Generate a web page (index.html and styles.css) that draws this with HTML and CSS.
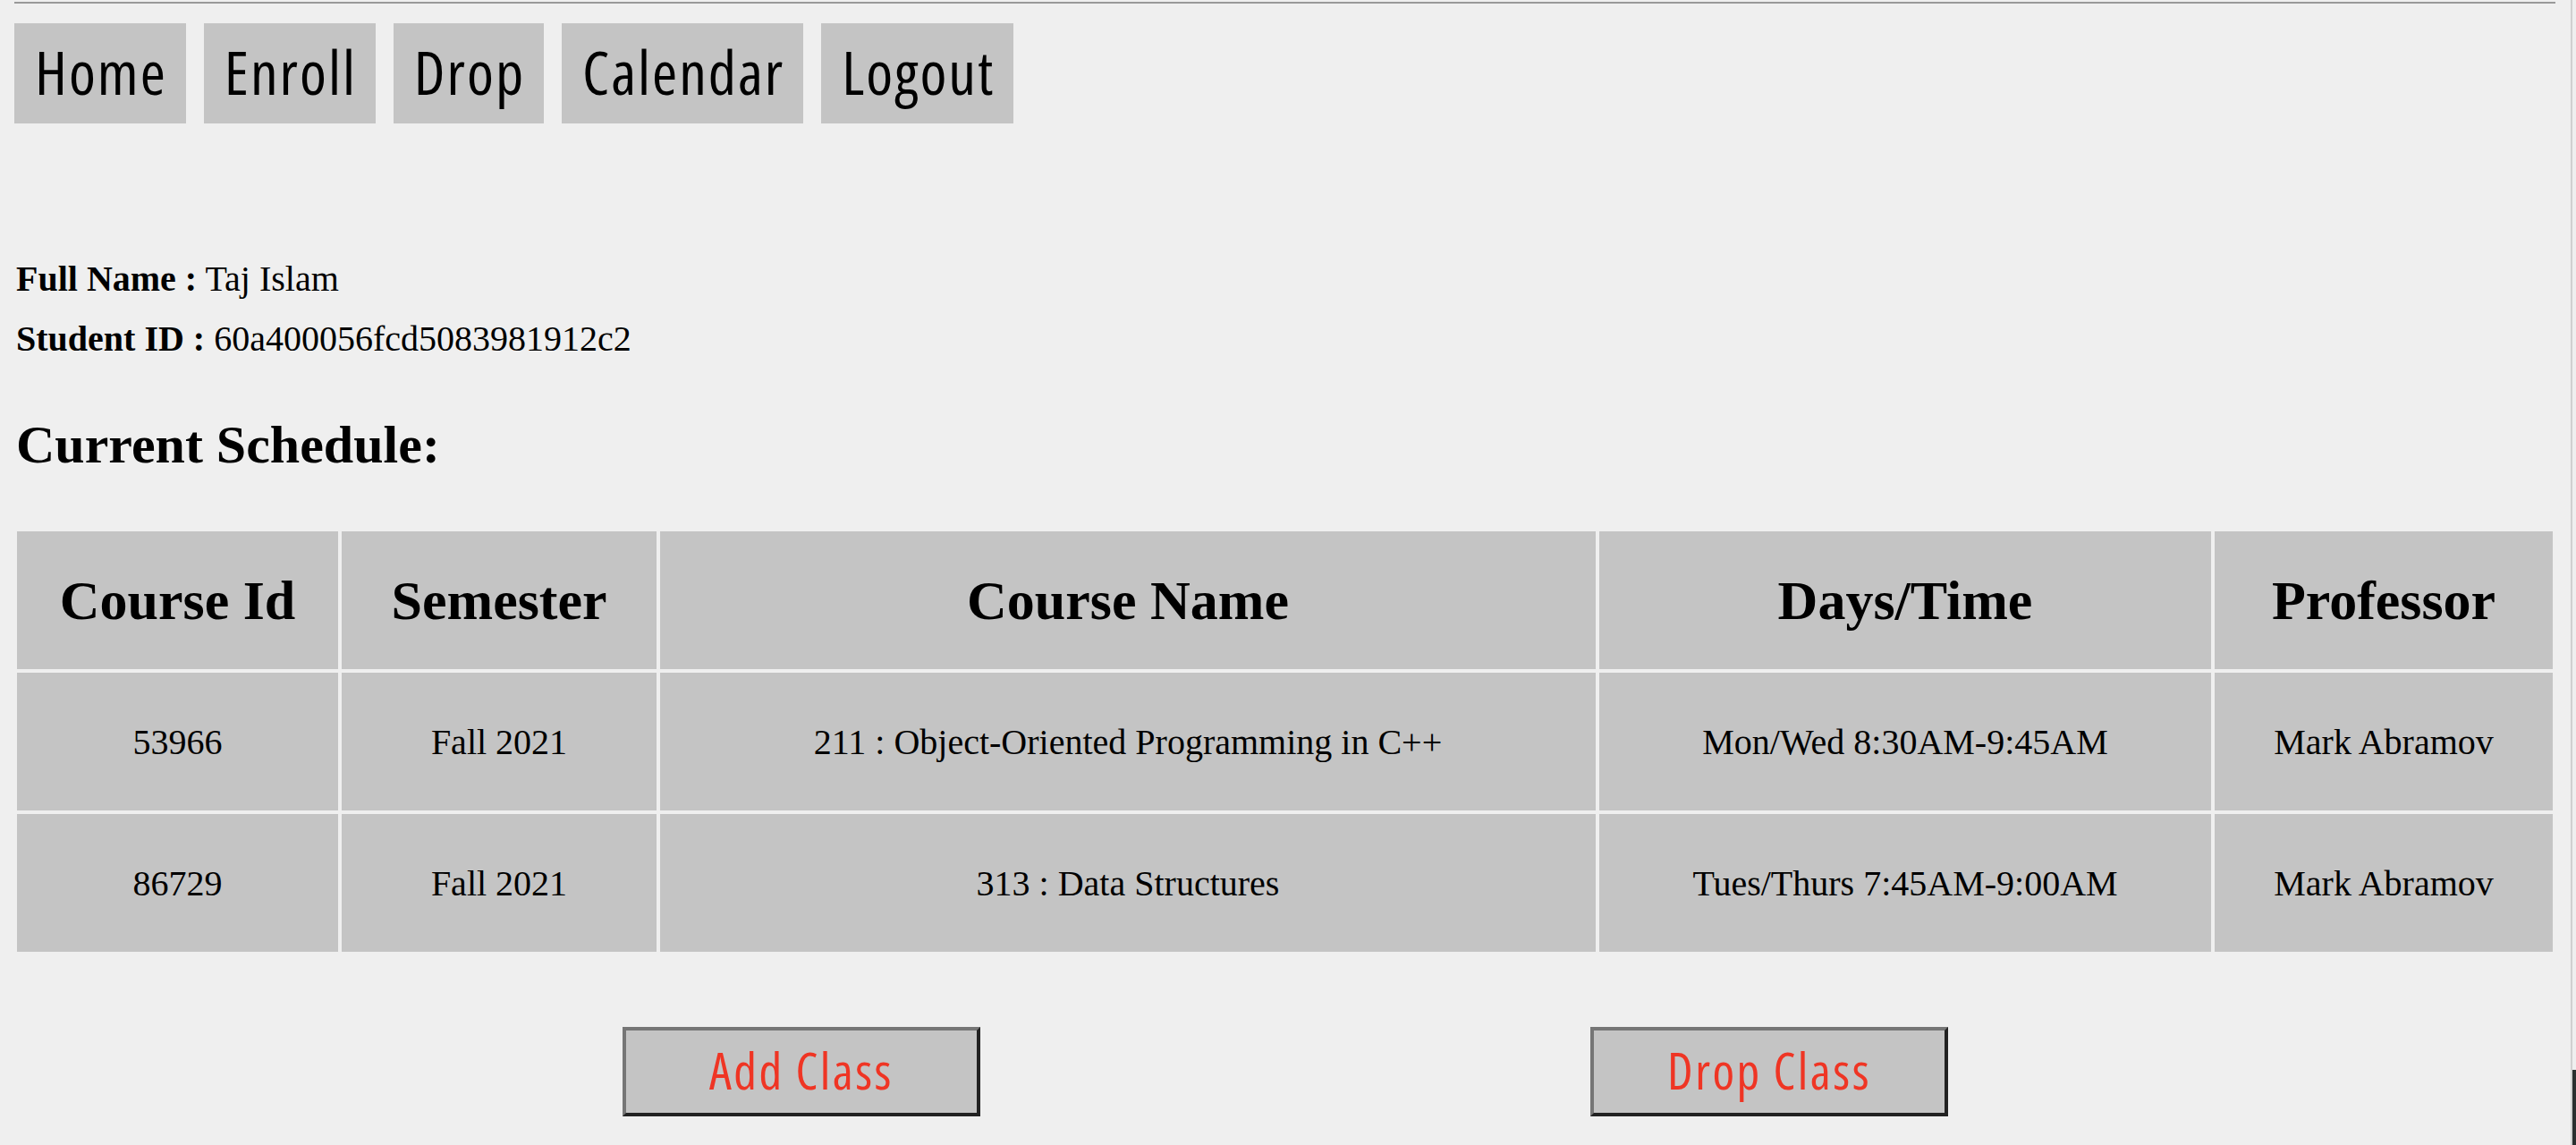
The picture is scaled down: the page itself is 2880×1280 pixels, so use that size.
FILE: index.html
```html
<!DOCTYPE html>
<html lang="en">
<head>
<meta charset="utf-8">
<title>Student Schedule</title>
<link rel="stylesheet" href="styles.css">
</head>
<body>
<div class="topline"></div>
<nav class="nav">
  <a class="nav-item" href="#">Home</a>
  <a class="nav-item" href="#">Enroll</a>
  <a class="nav-item" href="#">Drop</a>
  <a class="nav-item" href="#">Calendar</a>
  <a class="nav-item" href="#">Logout</a>
</nav>
<section class="info">
  <p class="info-line"><b>Full Name :</b> Taj Islam</p>
  <p class="info-line"><b>Student ID :</b> 60a400056fcd5083981912c2</p>
</section>
<h2 class="title">Current Schedule:</h2>
<table class="schedule">
  <thead>
    <tr>
      <th class="c1">Course Id</th>
      <th class="c2">Semester</th>
      <th class="c3">Course Name</th>
      <th class="c4">Days/Time</th>
      <th class="c5">Professor</th>
    </tr>
  </thead>
  <tbody>
    <tr>
      <td>53966</td>
      <td>Fall 2021</td>
      <td>211 : Object-Oriented Programming in C++</td>
      <td>Mon/Wed 8:30AM-9:45AM</td>
      <td>Mark Abramov</td>
    </tr>
    <tr>
      <td>86729</td>
      <td>Fall 2021</td>
      <td>313 : Data Structures</td>
      <td>Tues/Thurs 7:45AM-9:00AM</td>
      <td>Mark Abramov</td>
    </tr>
  </tbody>
</table>
<div class="actions">
  <button class="action-btn" type="button">Add Class</button>
  <button class="action-btn" type="button">Drop Class</button>
</div>
<div class="edge"></div>
<div class="edge-dark"></div>
</body>
</html>
```
FILE: styles.css
```css
html, body {
  margin: 0;
  padding: 0;
}
body {
  background: #efefef;
  color: #000;
  font-family: "Liberation Serif", "Times New Roman", serif;
  height: 1280px;
  overflow: hidden;
  position: relative;
}
.topline {
  margin: 2px 0 0 16px;
  width: 2841px;
  height: 0;
  border-top: 2px solid #999;
}
.nav {
  display: flex;
  gap: 20px;
  margin-top: 22px;
  padding-left: 16px;
}
.nav-item {
  display: flex;
  align-items: center;
  height: 112px;
  padding: 0 21px 6px 23px;
  box-sizing: border-box;
  background: #c4c4c4;
  color: #000;
  text-decoration: none;
  font-family: "Open Sans", "Noto Sans", sans-serif;
  font-stretch: condensed;
  font-size: 68px;
  letter-spacing: 2px;
}
.info {
  margin: 140px 0 0 18px;
}
.info-line {
  margin: 0;
  font-size: 40px;
  line-height: 67px;
}
.title {
  margin: 49px 0 0 18px;
  font-size: 60px;
  line-height: 72px;
  font-weight: bold;
}
.schedule {
  margin: 57px 0 0 15px;
  border-spacing: 4px;
  table-layout: fixed;
  width: 2843px;
}
.schedule th,
.schedule td {
  background: #c4c4c4;
  height: 154px;
  padding: 0;
  text-align: center;
  vertical-align: middle;
}
.schedule th {
  font-size: 62px;
  font-weight: bold;
}
.schedule td {
  font-size: 40px;
}
.c1 { width: 359px; }
.c2 { width: 352px; }
.c3 { width: 1046px; }
.c4 { width: 684px; }
.c5 { width: 378px; }
.actions {
  display: flex;
  justify-content: space-evenly;
  margin: 80px 0 0 14px;
  width: 2846px;
}
.action-btn {
  width: 400px;
  height: 100px;
  box-sizing: border-box;
  background: #c4c4c4;
  border: 4px solid;
  border-color: #767676 #222 #222 #767676;
  color: #ef3524;
  font-family: "Open Sans", "Noto Sans", sans-serif;
  font-stretch: condensed;
  font-size: 56px;
  letter-spacing: 2.5px;
  padding: 0 0 4px;
}
.edge {
  position: absolute;
  top: 0;
  right: 4px;
  width: 2px;
  height: 1280px;
  background: #d0d0d0;
}
.edge-dark {
  position: absolute;
  top: 1196px;
  right: 0;
  width: 4px;
  height: 84px;
  background: #2a2f2f;
}
```
